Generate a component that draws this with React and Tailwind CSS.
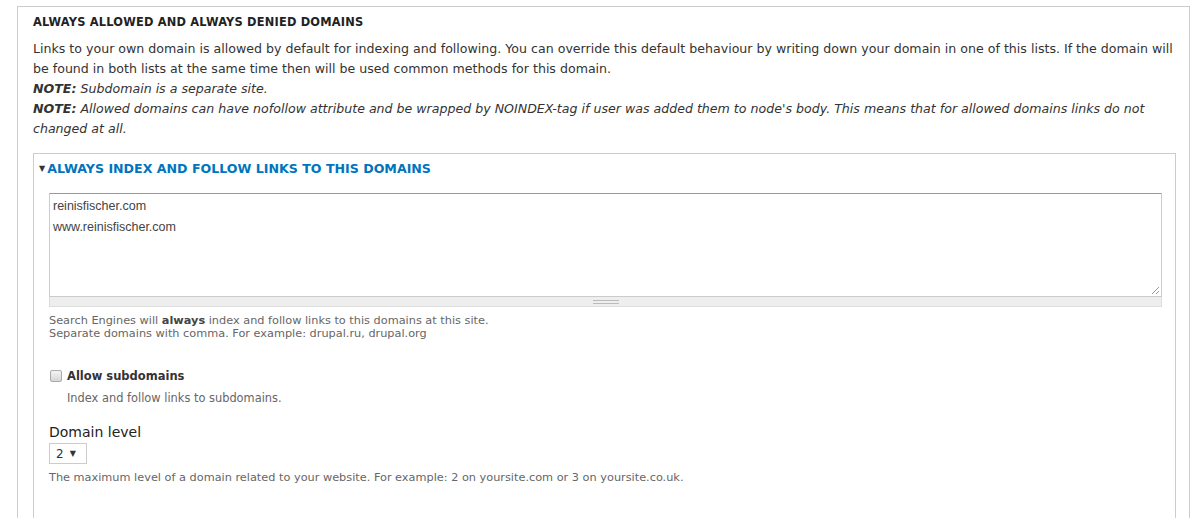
import React from "react";

const body = { fontFamily: '"DejaVu Sans", Verdana, sans-serif' };

const DomainsFieldset = () => {
  return (
    <div className="min-h-[518px] bg-white pt-[6px] pl-[17px] pr-[10px] text-[#333]" style={body}>
      <div className="min-h-[512px] border border-b-0 border-[#ccc] pl-[15px] pr-[13px] pt-[8px]">
        <div className="text-[11.4px] leading-[14px] font-semibold uppercase tracking-[0.2px] text-[#222]">
          Always allowed and always denied domains
        </div>

        <div className="mt-[10px] text-[12.6px] leading-[20px]">
          <p>
            Links to your own domain is allowed by default for indexing and following. You can override this default
            behaviour by writing down your domain in one of this lists. If the domain will be found in both lists at the
            same time then will be used common methods for this domain.
          </p>
          <p className="italic">
            <b className="font-bold">NOTE:</b> Subdomain is a separate site.
          </p>
          <p className="italic">
            <b className="font-bold">NOTE:</b> Allowed domains can have nofollow attribute and be wrapped by
            NOINDEX-tag if user was added them to node's body. This means that for allowed domains links do not
            changed at all.
          </p>
        </div>

        <div className="mt-[14px] min-h-[365px] border border-b-0 border-[#ccc] pl-[15px] pr-[13px] pt-[8px]">
          <div className="-ml-[10px] flex items-center text-[12.6px] leading-[14px] font-bold uppercase text-[#0074bd]">
            <span className="mr-[2px] text-[8px] text-[#333]">▼</span>
            Always index and follow links to this domains
          </div>

          <div className="mt-[17px]">
            <div className="relative h-[104px] border border-[#ccc] border-t-[#999] bg-white px-[3px] pt-[2px] text-[12.5px] leading-[21px] text-[#444]" style={{ fontFamily: '"Liberation Sans", Arial, sans-serif' }}>
              <div>reinisfischer.com</div>
              <div>www.reinisfischer.com</div>
              <svg className="absolute bottom-[1px] right-[1px]" width="9" height="9" viewBox="0 0 9 9">
                <path d="M8 1 L1 8 M8 5 L5 8" stroke="#999" strokeWidth="1" />
              </svg>
            </div>
            <div className="flex h-[10px] items-center justify-center border border-t-0 border-[#ddd] bg-[#eee]">
              <div className="flex w-[26px] flex-col gap-[2px]">
                <span className="h-px bg-[#bbb]" />
                <span className="h-px bg-[#bbb]" />
              </div>
            </div>
          </div>

          <div className="mt-[7px] text-[11.3px] leading-[13px] text-[#666]">
            <div>
              Search Engines will <b className="text-[#444]">always</b> index and follow links to this domains at this site.
            </div>
            <div>Separate domains with comma. For example: drupal.ru, drupal.org</div>
          </div>

          <div className="mt-[27px] flex items-center gap-[5px] text-[11.5px] leading-[18px] font-bold text-[#333]">
            <span className="ml-px h-[12px] w-[12px] rounded-[2px] border border-[#aaa] bg-gradient-to-b from-[#f4f4f4] to-[#d6d6d6]" />
            Allow subdomains
          </div>
          <div className="pl-[18px] pt-[6px] text-[11.4px] leading-[14px] text-[#666]">
            Index and follow links to subdomains.
          </div>

          <div className="mt-[18px] text-[14px] leading-[18px] text-[#222]">Domain level</div>
          <div className="mt-[2px] flex h-[21px] w-[38px] items-center gap-[6px] border border-[#ccc] pl-[6px] text-[12px] text-[#333]">
            2<span className="text-[8px]">▼</span>
          </div>
          <div className="mt-[7px] text-[11.3px] leading-[14px] text-[#666]">
            The maximum level of a domain related to your website. For example: 2 on yoursite.com or 3 on yoursite.co.uk.
          </div>
        </div>
      </div>
    </div>
  );
};

export default function App() {
  return <DomainsFieldset />;
}
